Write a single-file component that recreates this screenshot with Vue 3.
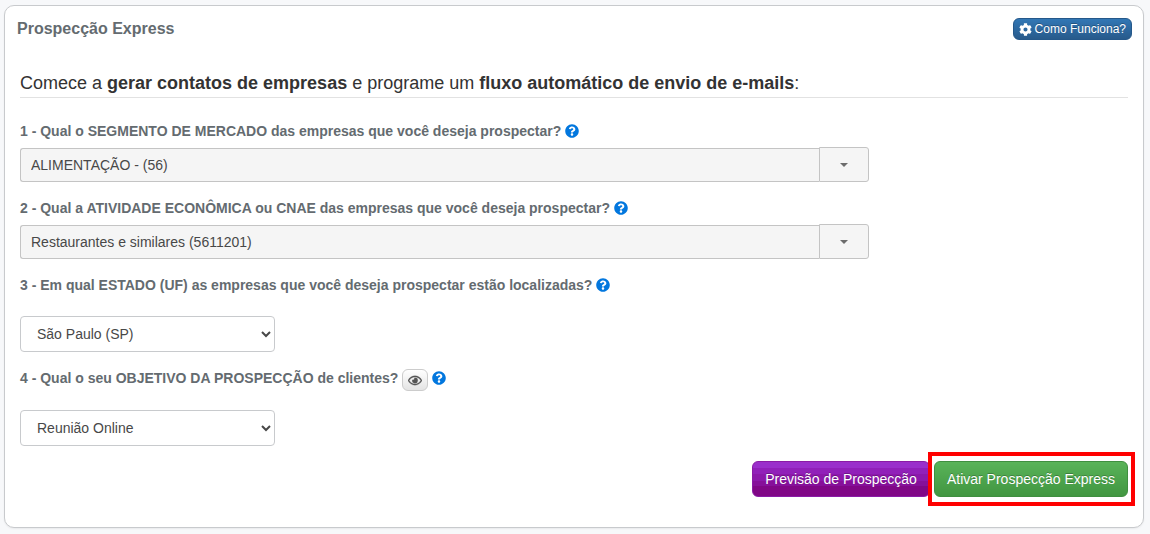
<script setup>
import { ref } from 'vue'

const segment = ref('ALIMENTAÇÃO - (56)')
const activity = ref('Restaurantes e similares (5611201)')
const state = ref('SP')
const goal = ref('reuniao')

const helpPath =
  'M504 256c0 136.997-111.043 248-248 248S8 392.997 8 256C8 119.083 119.043 8 256 8s248 111.083 248 248zM262.655 90c-54.497 0-89.255 22.957-116.549 63.758-3.536 5.286-2.353 12.415 2.715 16.258l34.699 26.31c5.205 3.947 12.621 3.008 16.665-2.122 17.864-22.658 30.113-35.797 57.303-35.797 20.429 0 45.698 13.148 45.698 32.958 0 14.976-12.363 22.667-32.534 33.976C247.128 238.528 216 254.941 216 296v4c0 6.627 5.373 12 12 12h56c6.627 0 12-5.373 12-12v-1.333c0-28.462 83.186-29.647 83.186-106.667 0-58.002-60.165-102-116.531-102zM256 338c-25.365 0-46 20.635-46 46 0 25.364 20.635 46 46 46s46-20.636 46-46c0-25.365-20.635-46-46-46z'
</script>

<template>
  <main class="card">
    <header class="card-header">
      <h1>Prospecção Express</h1>
      <button type="button" class="how">
        <svg viewBox="0 0 512 512" aria-hidden="true">
          <path
            d="M487.4 315.7l-42.6-24.6c4.3-23.2 4.3-47 0-70.2l42.6-24.6c4.9-2.8 7.1-8.6 5.5-14-11.1-35.6-30-67.8-54.7-94.6-3.8-4.1-10-5.1-14.8-2.3L380.8 110c-17.9-15.4-38.5-27.3-60.8-35.1V25.8c0-5.6-3.9-10.5-9.4-11.7-36.7-8.2-74.3-7.8-109.2 0-5.5 1.2-9.4 6.1-9.4 11.7V75c-22.2 7.9-42.8 19.8-60.8 35.1L88.7 85.5c-4.9-2.8-11-1.9-14.8 2.3-24.7 26.7-43.6 58.9-54.7 94.6-1.7 5.4.6 11.2 5.5 14L67.3 221c-4.3 23.2-4.3 47 0 70.2l-42.6 24.6c-4.9 2.8-7.1 8.6-5.5 14 11.1 35.6 30 67.8 54.7 94.6 3.8 4.1 10 5.1 14.8 2.3l42.6-24.6c17.9 15.4 38.5 27.3 60.8 35.1v49.2c0 5.6 3.9 10.5 9.4 11.7 36.7 8.2 74.3 7.8 109.2 0 5.5-1.2 9.4-6.1 9.4-11.7v-49.2c22.2-7.9 42.8-19.8 60.8-35.1l42.6 24.6c4.9 2.8 11 1.9 14.8-2.3 24.7-26.7 43.6-58.9 54.7-94.6 1.5-5.5-.7-11.3-5.6-14.1zM256 336c-44.1 0-80-35.9-80-80s35.9-80 80-80 80 35.9 80 80-35.9 80-80 80z"
          />
        </svg>
        <span>Como Funciona?</span>
      </button>
    </header>

    <form class="card-body" @submit.prevent>
      <h2>
        Comece a <strong>gerar contatos de empresas</strong> e programe um
        <strong>fluxo automático de envio de e-mails</strong>:
      </h2>

      <div class="question">
        <label for="segment">1 - Qual o SEGMENTO DE MERCADO das empresas que você deseja prospectar?</label>
        <svg class="help" viewBox="0 0 512 512" aria-hidden="true"><path :d="helpPath" /></svg>
      </div>
      <div class="combo">
        <input id="segment" v-model="segment" type="text" readonly />
        <button type="button" aria-label="Abrir segmentos"><i class="caret"></i></button>
      </div>

      <div class="question">
        <label for="activity">2 - Qual a ATIVIDADE ECONÔMICA ou CNAE das empresas que você deseja prospectar?</label>
        <svg class="help" viewBox="0 0 512 512" aria-hidden="true"><path :d="helpPath" /></svg>
      </div>
      <div class="combo">
        <input id="activity" v-model="activity" type="text" readonly />
        <button type="button" aria-label="Abrir atividades"><i class="caret"></i></button>
      </div>

      <div class="question">
        <label for="state">3 - Em qual ESTADO (UF) as empresas que você deseja prospectar estão localizadas?</label>
        <svg class="help" viewBox="0 0 512 512" aria-hidden="true"><path :d="helpPath" /></svg>
      </div>
      <select id="state" v-model="state">
        <option value="SP">São Paulo (SP)</option>
      </select>

      <div class="question with-peek">
        <label for="goal">4 - Qual o seu OBJETIVO DA PROSPECÇÃO de clientes?</label>
        <button type="button" class="peek" aria-label="Visualizar objetivo">
          <svg viewBox="0 0 576 512" aria-hidden="true">
            <path
              d="M288 144a110.94 110.94 0 0 0-31.24 5 55.4 55.4 0 0 1 7.24 27 56 56 0 0 1-56 56 55.4 55.4 0 0 1-27-7.24A111.71 111.71 0 1 0 288 144zm284.52 97.4C518.29 135.59 410.93 64 288 64S57.68 135.64 3.48 241.41a32.35 32.35 0 0 0 0 29.19C57.71 376.41 165.07 448 288 448s230.32-71.64 284.52-177.41a32.35 32.35 0 0 0 0-29.19zM288 400c-98.65 0-189.09-55-237.93-144C98.91 167 189.34 112 288 112s189.09 55 237.93 144C477.1 345 386.66 400 288 400z"
            />
          </svg>
        </button>
        <svg class="help" viewBox="0 0 512 512" aria-hidden="true"><path :d="helpPath" /></svg>
      </div>
      <select id="goal" v-model="goal">
        <option value="reuniao">Reunião Online</option>
      </select>

      <footer class="actions">
        <button type="button" class="action forecast">Previsão de Prospecção</button>
        <div class="highlight">
          <button type="submit" class="action activate">Ativar Prospecção Express</button>
        </div>
      </footer>
    </form>
  </main>
</template>

<style>
body {
  background: #f7f8fa;
}
</style>

<style scoped>
* {
  box-sizing: border-box;
}

.card {
  margin: 5px 6px 6px 4px;
  padding: 12px 11px 21px 12px;
  border: 1px solid #c8cacd;
  border-radius: 10px;
  background: #fff;
  box-shadow: 0 1px 2px rgba(0, 0, 0, 0.06);
  color: #333;
  font-family: "Liberation Sans", Arial, sans-serif;
  font-size: 14px;
  line-height: 20px;
}

button,
input,
select {
  font: inherit;
}

.card-header {
  display: flex;
  align-items: center;
  justify-content: space-between;
}

h1 {
  margin: 0;
  color: #646b70;
  font-size: 16px;
  line-height: 20px;
}

.how {
  display: flex;
  align-items: center;
  gap: 3px;
  height: 22px;
  padding: 0 5px;
  border: 1px solid #25588a;
  border-radius: 6px;
  background: linear-gradient(#3277b5, #285a8b);
  color: #fff;
  font-size: 12px;
  text-shadow: 0 -1px 0 rgba(0, 0, 0, 0.25);
}

.how svg {
  width: 13px;
  height: 13px;
  fill: #fff;
}

.card-body {
  padding: 0 4px 0 3px;
}

h2 {
  margin: 31px 0 22px;
  padding-bottom: 2px;
  border-bottom: 1px solid #e2e2e2;
  color: #333;
  font-size: 18px;
  font-weight: 400;
  line-height: 24px;
}

.question {
  display: flex;
  align-items: center;
  gap: 4px;
  height: 23px;
  padding-bottom: 2px;
  color: #646b70;
  font-weight: 700;
}

.with-peek {
  height: 24px;
}

.help {
  width: 14px;
  height: 14px;
  fill: #0277de;
}

.combo {
  display: flex;
  align-items: flex-end;
  width: 849px;
  max-width: 100%;
  height: 35px;
  margin: 4px 0 15px;
}

.combo input {
  flex: 1;
  min-width: 0;
  height: 34px;
  padding: 0 10px;
  border: 1px solid #c4c4c4;
  border-right: 0;
  border-radius: 3px 0 0 3px;
  outline: 0;
  background: #f5f5f5;
  color: #484848;
}

.combo button {
  display: flex;
  align-items: center;
  justify-content: center;
  width: 50px;
  height: 35px;
  padding: 0;
  border: 1px solid #c4c4c4;
  border-radius: 0 3px 3px 0;
  background: #f5f5f5;
}

.caret {
  width: 8px;
  border: 4px solid transparent;
  border-top-color: #6c6c6c;
  border-bottom: 0;
}

select {
  display: block;
  width: 255px;
  height: 36px;
  margin: 19px 0 15px;
  padding: 6px 0 6px 12px;
  border: 1px solid #c8cacd;
  border-radius: 4px;
  background: #fff;
  color: #484848;
}

.peek {
  display: flex;
  align-items: center;
  justify-content: center;
  align-self: flex-end;
  width: 26px;
  height: 22px;
  margin-bottom: -2px;
  padding: 0;
  border: 1px solid #ccc;
  border-radius: 6px;
  background: linear-gradient(#fff, #e4e4e4);
}

.peek svg {
  width: 14px;
  height: 13px;
  fill: #555;
  stroke: #555;
  stroke-width: 12;
}

.actions {
  display: flex;
  align-items: center;
  justify-content: flex-end;
  margin: -9px -7px 0 0;
}

.action {
  height: 36px;
  padding: 0 12px;
  border: 1px solid;
  border-radius: 6px;
  color: #fff;
  text-shadow: 0 -1px 0 rgba(0, 0, 0, 0.25);
  white-space: nowrap;
}

.forecast {
  margin-right: -2px;
  border-color: #8a1ba6;
  background: linear-gradient(#9a2fcb 0 18%, #9120b9 18% 36%, #8c18ab 36% 55%, #86109a 55% 72%, #800786 72%);
}

.highlight {
  position: relative;
  padding: 5px 3px 5px 2px;
  border: 4px solid #f00;
}

.highlight .action {
  display: block;
}

.activate {
  border-color: #3f8f40;
  background: linear-gradient(#59b359, #419641);
}
</style>
